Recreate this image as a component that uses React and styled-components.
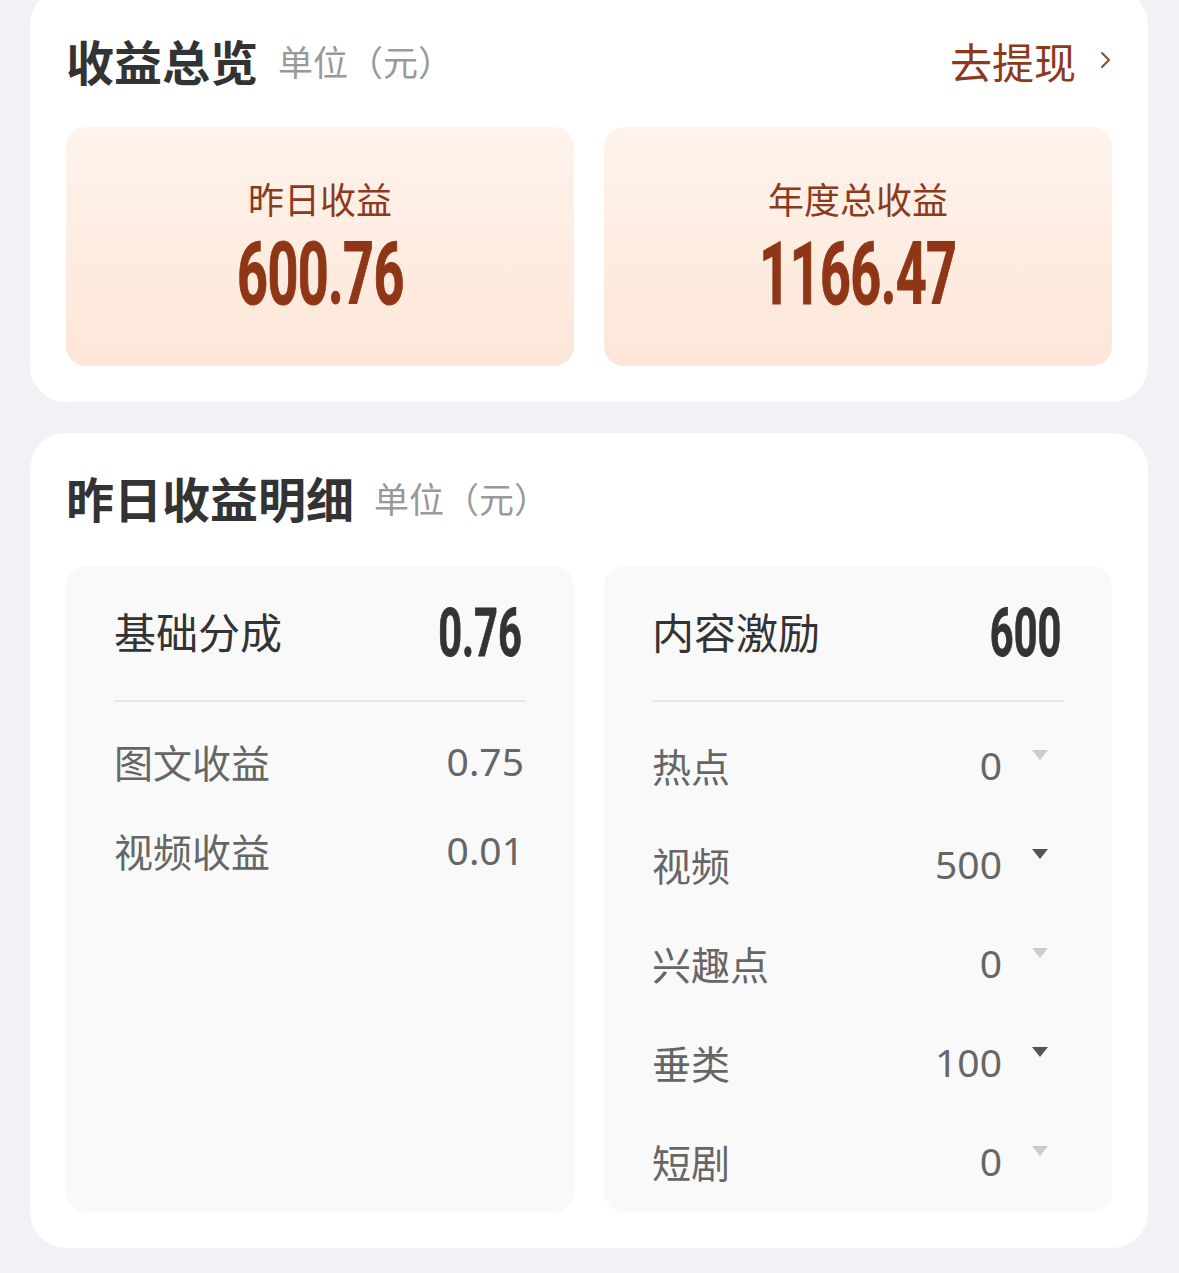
import React from "react";
import styled, { createGlobalStyle } from "styled-components";

const GlobalStyle = createGlobalStyle`
  html, body {
    margin: 0;
    padding: 0;
    background: #f2f1f6;
    overflow: hidden;
  }
  body {
    font-family: "Noto Sans", "Noto Sans CJK SC", sans-serif;
  }
`;

const Page = styled.div`
  width: 1179px;
  height: 1273px;
  box-sizing: border-box;
  margin-top: -11px;
  padding: 0 31px 0 30px;
  display: flex;
  flex-direction: column;
  gap: 31px;
`;

const Card = styled.section`
  background: #fff;
  border-radius: 36px;
  padding: ${(p) => p.$top}px 36px 36px;
`;

const CardHeader = styled.div`
  height: 64px;
  display: flex;
  align-items: center;
  justify-content: space-between;
`;

const TitleWrap = styled.div`
  display: flex;
  align-items: center;
`;

const Title = styled.h2`
  margin: 0;
  font-family: "Noto Sans CJK SC", sans-serif;
  font-size: 48px;
  font-weight: 700;
  color: #333;
  line-height: 64px;
`;

const Unit = styled.span`
  margin-left: 20px;
  font-family: "Noto Sans CJK SC", sans-serif;
  font-size: 35px;
  color: #999;
`;

const Withdraw = styled.a`
  display: flex;
  align-items: center;
  gap: 24px;
  font-family: "Noto Sans CJK SC", sans-serif;
  font-size: 42px;
  color: #8c3a1c;
  text-decoration: none;
  cursor: pointer;
`;

const SummaryGrid = styled.div`
  margin-top: 35px;
  display: grid;
  grid-template-columns: 1fr 1fr;
  gap: 30px;
`;

const SummaryBox = styled.div`
  height: 239px;
  box-sizing: border-box;
  padding-top: 51px;
  border-radius: 20px;
  background: linear-gradient(180deg, #fff3eb 0%, #fde6d8 100%);
  display: flex;
  flex-direction: column;
  align-items: center;
`;

const SummaryLabel = styled.div`
  font-family: "Noto Sans CJK SC", sans-serif;
  font-size: 36px;
  line-height: 40px;
  color: #8b3a1e;
`;

const SummaryValue = styled.div`
  margin-top: 16px;
  font-family: Roboto, "Liberation Sans", sans-serif;
  font-weight: 700;
  font-size: 87px;
  line-height: 80px;
  color: #8e3616;
  letter-spacing: -1px;
  -webkit-text-stroke: 1px #8e3616;
  transform: scaleX(0.62);
  transform-origin: center;
`;

const DetailGrid = styled.div`
  margin-top: 37px;
  height: 646px;
  display: grid;
  grid-template-columns: 1fr 1fr;
  gap: 30px;
`;

const DetailBox = styled.div`
  background: #f9f9f9;
  border-radius: 20px;
  padding: 0 48px;
`;

const HeaderRow = styled.div`
  height: 134px;
  display: flex;
  align-items: center;
  justify-content: space-between;
  border-bottom: 2px solid #e6e6e6;
`;

const HeaderLabel = styled.span`
  margin-bottom: 6px;
  font-family: "Noto Sans CJK SC", sans-serif;
  font-size: 42px;
  color: #333;
`;

const HeaderValue = styled.span`
  display: inline-block;
  margin-right: ${(p) => p.$mr || 0}px;
  font-family: Roboto, "Liberation Sans", sans-serif;
  font-weight: 700;
  font-size: 67px;
  line-height: 1;
  color: #333;
  -webkit-text-stroke: 0.8px #333;
  transform: scaleX(0.62);
  transform-origin: right center;
`;

const RowList = styled.div`
  padding-top: ${(p) => p.$pt}px;
`;

const Row = styled.div`
  height: ${(p) => p.$h}px;
  display: flex;
  align-items: center;
`;

const RowLabel = styled.span`
  flex: 1;
  font-family: "Noto Sans CJK SC", sans-serif;
  font-size: 39px;
  color: #666;
`;

const RowValue = styled.span`
  font-size: 39px;
  color: #666;
  margin-right: ${(p) => p.$mr || 0}px;
`;

const CaretWrap = styled.span`
  width: 62px;
  display: flex;
  padding-left: 30px;
  box-sizing: border-box;
  align-self: center;
  transform: translateY(-10px);
`;

const Caret = styled.span`
  width: 0;
  height: 0;
  border-left: 8px solid transparent;
  border-right: 8px solid transparent;
  border-top: 10px solid ${(p) => (p.$active ? "#555" : "#ccc")};
`;

const baseRows = [
  { label: "图文收益", value: "0.75" },
  { label: "视频收益", value: "0.01" },
];

const incentiveRows = [
  { label: "热点", value: "0" },
  { label: "视频", value: "500" },
  { label: "兴趣点", value: "0" },
  { label: "垂类", value: "100" },
  { label: "短剧", value: "0" },
];

export default function App() {
  return (
    <>
      <GlobalStyle />
      <Page>
        <Card $top={39}>
          <CardHeader>
            <TitleWrap>
              <Title>收益总览</Title>
              <Unit>单位（元）</Unit>
            </TitleWrap>
            <Withdraw>
              去提现
              <svg width="12" height="20" viewBox="0 0 12 20">
                <polyline
                  points="2,3 9,10 2,17"
                  fill="none"
                  stroke="#8c4a30"
                  strokeWidth="2"
                  strokeLinecap="round"
                  strokeLinejoin="round"
                />
              </svg>
            </Withdraw>
          </CardHeader>
          <SummaryGrid>
            <SummaryBox>
              <SummaryLabel>昨日收益</SummaryLabel>
              <SummaryValue>600.76</SummaryValue>
            </SummaryBox>
            <SummaryBox>
              <SummaryLabel>年度总收益</SummaryLabel>
              <SummaryValue>1166.47</SummaryValue>
            </SummaryBox>
          </SummaryGrid>
        </Card>

        <Card $top={32}>
          <CardHeader>
            <TitleWrap>
              <Title>昨日收益明细</Title>
              <Unit>单位（元）</Unit>
            </TitleWrap>
          </CardHeader>
          <DetailGrid>
            <DetailBox>
              <HeaderRow>
                <HeaderLabel>基础分成</HeaderLabel>
                <HeaderValue $mr={4}>0.76</HeaderValue>
              </HeaderRow>
              <RowList $pt={14}>
                {baseRows.map((r) => (
                  <Row key={r.label} $h={89}>
                    <RowLabel>{r.label}</RowLabel>
                    <RowValue $mr={2}>{r.value}</RowValue>
                  </Row>
                ))}
              </RowList>
            </DetailBox>
            <DetailBox>
              <HeaderRow>
                <HeaderLabel>内容激励</HeaderLabel>
                <HeaderValue $mr={3}>600</HeaderValue>
              </HeaderRow>
              <RowList $pt={13}>
                {incentiveRows.map((r) => (
                  <Row key={r.label} $h={99}>
                    <RowLabel>{r.label}</RowLabel>
                    <RowValue>{r.value}</RowValue>
                    <CaretWrap>
                      <Caret $active={r.value !== "0"} />
                    </CaretWrap>
                  </Row>
                ))}
              </RowList>
            </DetailBox>
          </DetailGrid>
        </Card>
      </Page>
    </>
  );
}
